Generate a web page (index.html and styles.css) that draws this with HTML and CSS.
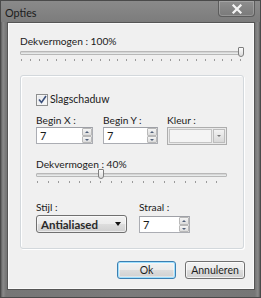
FILE: index.html
```html
<!DOCTYPE html>
<html>
<head>
<meta charset="utf-8">
<link rel="stylesheet" href="styles.css">
</head>
<body>
<div class="window">
  <div class="titlebar">
    <span class="title">Opties</span>
    <div class="close">
      <svg width="12" height="10" viewBox="0 0 12 10"><path d="M2.5 1.5 L9.5 8.5 M9.5 1.5 L2.5 8.5" stroke="#f4f4f4" stroke-width="2.2" stroke-linecap="square"/></svg>
    </div>
  </div>
  <div class="client">
    <div class="label top-label">Dekvermogen : 100%</div>
    <div class="slider wide">
      <div class="track"></div>
      <div class="thumb" style="left: 218px"></div>
      <div class="ticks"></div>
    </div>
    <div class="group">
      <label class="check"><span class="box"><svg width="9" height="9" viewBox="0 0 9 9"><path d="M1 4.5 L3.5 7.5 L8 1" fill="none" stroke="#3a4f7a" stroke-width="1.6"/></svg></span>Slagschaduw</label>
      <div class="row three">
        <div class="field">
          <div class="label">Begin X :</div>
          <div class="spin w57"><span class="val">7</span><span class="spinbtns"><span class="sb up"></span><span class="sb down"></span></span></div>
        </div>
        <div class="field">
          <div class="label">Begin Y :</div>
          <div class="spin w55"><span class="val">7</span><span class="spinbtns"><span class="sb up"></span><span class="sb down"></span></span></div>
        </div>
        <div class="field">
          <div class="label">Kleur :</div>
          <div class="colorcombo"><span class="swatch"></span><span class="ddbtn"><span class="tri small"></span></span></div>
        </div>
      </div>
      <div class="label mid-label">Dekvermogen : 40%</div>
      <div class="slider narrow">
        <div class="track"></div>
        <div class="thumb" style="left: 62px"></div>
        <div class="ticks"></div>
      </div>
      <div class="row two">
        <div class="field">
          <div class="label">Stijl :</div>
          <div class="combo"><span>Antialiased</span><span class="tri"></span></div>
        </div>
        <div class="field">
          <div class="label">Straal :</div>
          <div class="spin w51"><span class="val">7</span><span class="spinbtns"><span class="sb up"></span><span class="sb down"></span></span></div>
        </div>
      </div>
    </div>
    <div class="buttons">
      <button class="btn default">Ok</button>
      <button class="btn">Annuleren</button>
    </div>
  </div>
</div>
</body>
</html>
```

FILE: styles.css
```css
* { box-sizing: border-box; }
html, body { margin: 0; padding: 0; background: #6d6d6d; }
body { width: 261px; height: 298px; overflow: hidden; font-family: Lato, "Noto Sans", sans-serif; font-size: 10.2px; color: #1a1a1a; }

.window {
  width: 261px; height: 298px;
  background: linear-gradient(90deg, #5e5e5e 0px, #8a8a8a 2px, #767676 5px, #7b7b7b 50%, #767676 calc(100% - 5px), #8a8a8a calc(100% - 2px), #5e5e5e 100%);
  border: 1px solid #4a4a4a;
  padding: 0 5px 7px 6px;
  display: flex; flex-direction: column;
}
.titlebar {
  height: 21px; flex: none;
  display: flex; align-items: flex-start; justify-content: space-between;
  margin: 0 -5px 0 -6px;
  background: linear-gradient(180deg, #8a8a8a 0%, #7c7c7c 100%);
}
.title { font-size: 10.8px; color: #1b1b1b; padding: 5px 0 0 4px; line-height: 13px; }
.close {
  width: 37px; height: 16px; margin-right: 5px;
  border: 1px solid #5c5c5c; border-top: none;
  border-radius: 0 0 4px 4px;
  background: linear-gradient(180deg, #8e8e8e, #7a7a7a);
  box-shadow: inset 0 0 0 1px rgba(255,255,255,0.2);
  display: flex; align-items: center; justify-content: center;
}
.client {
  flex: 1;
  background: #f0f0f0;
  border: 1px solid #555;
  box-shadow: inset 0 0 0 1px #fafafa;
  padding: 12px 0 0 12px;
  display: flex; flex-direction: column;
}
.label { line-height: 13px; height: 13px; white-space: nowrap; }

.slider { position: relative; height: 16px; }
.slider.wide { width: 224px; margin-top: -2px; }
.slider.narrow { width: 191px; margin-top: -3px; }
.track {
  position: absolute; left: 0; right: 0; top: 5px; height: 4px;
  background: #e7eaea; border: 1px solid #b8b8b8; border-radius: 1px;
  box-shadow: inset 0 1px 0 #d6d6d6;
}
.thumb {
  position: absolute; top: 1px; width: 6px; height: 10px;
  background: linear-gradient(180deg, #fbfbfb, #dcdcdc);
  border: 1px solid #7e7e7e; border-radius: 1px 1px 3px 3px;
}
.ticks {
  position: absolute; left: 1px; right: 1px; top: 13px; height: 2px;
  background: repeating-linear-gradient(90deg, #9a9a9a 0 1px, transparent 1px 8.76px);
}
.slider.narrow .ticks { background: repeating-linear-gradient(90deg, #9a9a9a 0 1px, transparent 1px 10.55px); }

.group {
  width: 224px; height: 174px;
  margin-top: 13px;
  border: 1px solid #d3d8dc; border-radius: 3px;
  box-shadow: 1px 1px 0 #ffffff, inset 1px 1px 0 #ffffff;
  padding: 17px 0 0 15px;
  display: flex; flex-direction: column;
}
.check { display: flex; align-items: center; height: 13px; line-height: 13px; gap: 2px; font-size: 10.5px; }
.box {
  width: 12px; height: 12px;
  border: 1px solid #8e8f8f; background: linear-gradient(135deg, #e4e6ea, #fbfbfb);
  box-shadow: inset 0 0 0 1px #f4f4f4;
  display: flex; align-items: center; justify-content: center;
}
.row { display: flex; }
.row.three { margin-top: 8px; }
.row.three .field:nth-child(1) { width: 67px; }
.row.three .field:nth-child(2) { width: 64px; }
.mid-label { margin-top: 13px; }
.row.two { margin-top: 17px; }
.row.two .field:nth-child(1) { width: 103px; }
.field { display: flex; flex-direction: column; }
.row.two .label { margin-bottom: 1px; }

.spin {
  height: 17px; background: #fff;
  border: 1px solid #abadb3; border-top-color: #9ea0a6;
  display: flex; align-items: center; justify-content: space-between;
  padding-left: 3px;
}
.row.two .spin { margin-top: 1px; height: 17px; }
.w57 { width: 57px; } .w55 { width: 55px; } .w51 { width: 51px; }
.val { font-size: 11px; line-height: 15px; }
.spinbtns { display: flex; flex-direction: column; height: 15px; width: 10px; }
.sb {
  flex: 1; position: relative;
  background: linear-gradient(180deg, #f5f5f5, #dcdcdc);
  border: 1px solid #b9b9b9; border-radius: 1px;
}
.sb::after {
  content: ""; position: absolute; left: 2px; top: 2px;
  border-left: 2px solid transparent; border-right: 2px solid transparent;
}
.sb.up::after { border-bottom: 2px solid #50607a; }
.sb.down::after { border-top: 2px solid #50607a; }

.colorcombo {
  width: 60px; height: 18px;
  border: 1px solid #adadad; background: #e9e9e9;
  display: flex; align-items: center; padding: 1px;
}
.swatch { flex: 1; height: 14px; background: #f4f4f4; border: 1px solid #c4c4c4; }
.ddbtn {
  width: 12px; height: 14px; margin-left: 1px;
  background: linear-gradient(180deg, #f2f2f2, #d8d8d8);
  border: 1px solid #bcbcbc;
  display: flex; align-items: center; justify-content: center;
}
.tri { width: 0; height: 0; border-left: 3.5px solid transparent; border-right: 3.5px solid transparent; border-top: 4px solid #111; }
.tri.small { border-left-width: 2px; border-right-width: 2px; border-top: 2px solid #777; }

.combo {
  width: 91px; height: 18px;
  border: 1px solid #707070; border-radius: 3px;
  background: linear-gradient(180deg, #f2f2f2 0%, #ebebeb 50%, #dddddd 51%, #cfcfcf 100%);
  box-shadow: inset 0 0 0 1px rgba(255,255,255,0.6);
  display: flex; align-items: center; justify-content: space-between;
  padding: 0 5px 0 4px; font-size: 11.5px; font-weight: 700; color: #2a2a2a;
}

.buttons { display: flex; gap: 9px; margin-top: 12px; padding-left: 97px; }
.btn {
  font-family: inherit; font-size: 10.5px; color: #1e1e1e;
  height: 18px; padding: 0; line-height: 14px;
  border: 1px solid #707070; border-radius: 3px;
  background: linear-gradient(180deg, #f2f2f2 0%, #ebebeb 50%, #dddddd 51%, #cfcfcf 100%);
  box-shadow: inset 0 0 0 1px rgba(255,255,255,0.7);
  width: 60px;
}
.btn.default {
  width: 59px;
  border-color: #3c7fb1;
  box-shadow: inset 0 0 0 1px #9fe0ff, inset 0 0 0 2px rgba(255,255,255,0.4);
}
```
